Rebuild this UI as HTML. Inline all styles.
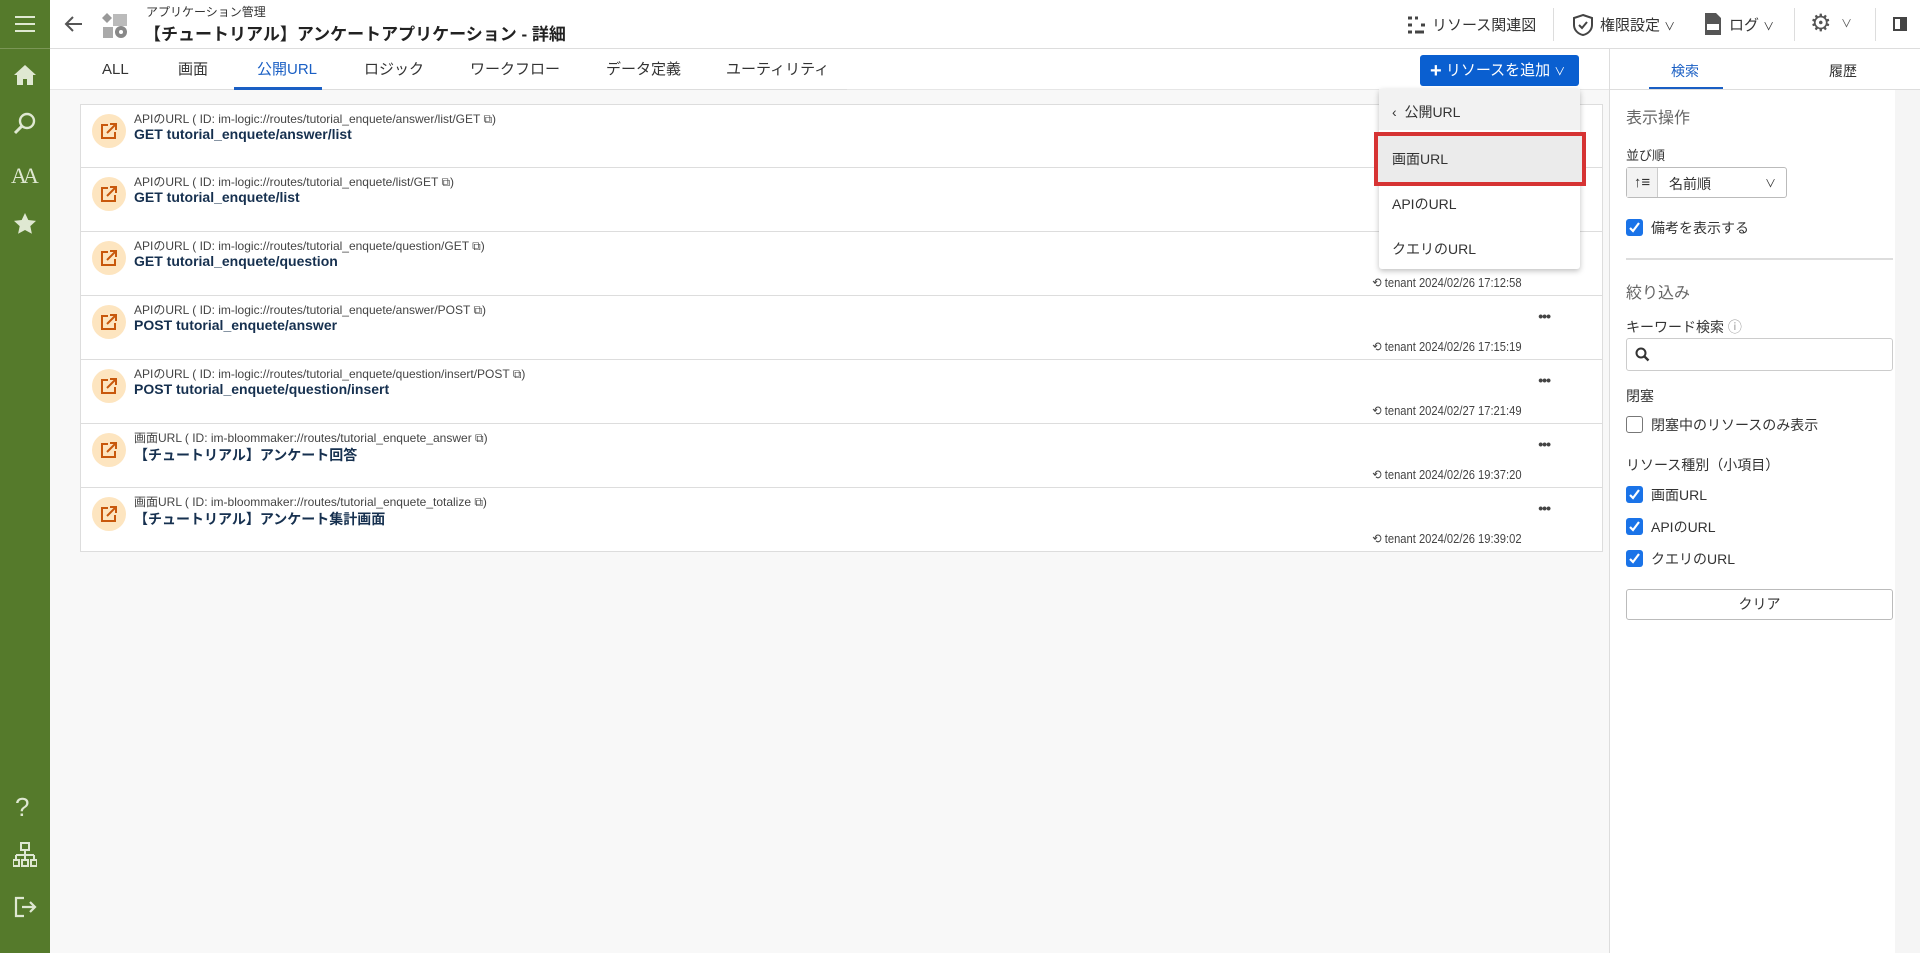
<!DOCTYPE html>
<html><head><meta charset="utf-8">
<style>
*{box-sizing:border-box;margin:0;padding:0}
body{width:1920px;height:953px;overflow:hidden;font-family:"Liberation Sans","Noto Sans CJK JP",sans-serif;color:#333;background:#f8f8f8;position:relative}
.abs{position:absolute}
.side{left:0;top:0;width:50px;height:953px;background:#557a2b}
.side svg{position:absolute;left:13px}
.hdr{left:50px;top:0;width:1870px;height:49px;background:#fff;border-bottom:1px solid #ddd}
.tabs{left:50px;top:49px;width:1559px;height:41px;background:#fff;border-bottom:1px solid #e6e6e6}
.tab{position:absolute;top:60px;height:20px;line-height:20px;font-size:15px;color:#333}
.row{position:absolute;left:80px;width:1523px;height:64px;background:#fff;border:1px solid #ddd;border-top:none}
.row .ic{position:absolute;left:11px;top:9px;width:34px;height:34px;border-radius:50%;background:#fde5c0}
.row .ic svg{position:absolute;left:8px;top:8px}
.row .lb{position:absolute;left:53px;top:5px;font-size:12px;color:#444}
.row .tt{position:absolute;left:53px;top:21px;font-size:14px;font-weight:bold;color:#16304f}
.row .ts{position:absolute;right:80px;top:43px;font-size:13px;color:#444;transform:scaleX(.86);transform-origin:right}
.row .dots{position:absolute;right:52px;top:12px;font-size:14px;font-weight:bold;color:#444;letter-spacing:-1px}
.rp{left:1609px;top:49px;width:311px;height:904px;background:#fff;border-left:1px solid #ddd}
.lbl{position:absolute;left:1626px;font-size:14px;color:#333}
.cb{position:absolute;left:1626px;width:17px;height:17px;border-radius:3px;background:#1a73e8}
.cb svg{position:absolute;left:2px;top:2px}
</style></head><body>
<div class="abs side">
<svg style="top:14px" width="24" height="20"><path d="M2 3h20M2 10h20M2 17h20" stroke="#dfe8d2" stroke-width="2"/></svg>
<div class="abs" style="left:0;top:48px;width:50px;border-top:1px solid #7b9656"></div>
<svg style="top:63px" width="24" height="24"><path d="M12 2L1 12h3v10h6v-6h4v6h6V12h3z" fill="#dfe8d2"/></svg>
<svg style="top:112px" width="24" height="24"><circle cx="14" cy="9" r="7" stroke="#dfe8d2" stroke-width="2.4" fill="none"/><path d="M9 14L2 21" stroke="#dfe8d2" stroke-width="3"/></svg>
<div class="abs" style="left:11px;top:163px;color:#dfe8d2;font-family:'Liberation Serif',serif;font-size:22px;letter-spacing:-4px">AA</div>
<svg style="top:212px" width="24" height="24"><path d="M12 1l3.3 7 7.7.9-5.7 5.2 1.6 7.6L12 18l-6.9 3.7 1.6-7.6L1 8.9 8.7 8z" fill="#dfe8d2"/></svg>
<div class="abs" style="left:15px;top:792px;color:#dfe8d2;font-size:26px">?</div>
<svg style="top:842px" width="24" height="26"><rect x="8" y="1" width="8" height="7" fill="none" stroke="#dfe8d2" stroke-width="2"/><path d="M12 8v5M3 13h18M3 13v5M12 13v5M21 13v5" stroke="#dfe8d2" stroke-width="2" fill="none"/><rect x="0" y="18" width="6" height="6" fill="none" stroke="#dfe8d2" stroke-width="2"/><rect x="9" y="18" width="6" height="6" fill="none" stroke="#dfe8d2" stroke-width="2"/><rect x="18" y="18" width="6" height="6" fill="none" stroke="#dfe8d2" stroke-width="2"/></svg>
<svg style="top:895px" width="24" height="24"><path d="M11 3H3v18h8M9 12h13M17 7l5 5-5 5" stroke="#dfe8d2" stroke-width="2.2" fill="none"/></svg>
</div>

<div class="abs hdr"></div>
<svg class="abs" style="left:64px;top:15px" width="20" height="18"><path d="M18 9H3M9 2L2 9l7 7" stroke="#555" stroke-width="2" fill="none"/></svg>
<svg class="abs" style="left:101px;top:11px" width="30" height="30"><rect x="12" y="3" width="14" height="12" fill="#bbb"/><path d="M6 2l5 5-5 5-5-5z" fill="#999"/><rect x="2" y="16" width="10" height="11" fill="#aaa"/><circle cx="20" cy="21" r="6" fill="#888"/><circle cx="20" cy="21" r="2" fill="#fff"/></svg>
<div class="abs" style="left:146px;top:3px;font-size:12px;color:#333">アプリケーション管理</div>
<div class="abs" style="left:144px;top:20px;font-size:17px;font-weight:bold;color:#222">【チュートリアル】アンケートアプリケーション - 詳細</div>

<svg class="abs" style="left:1407px;top:16px" width="18" height="18"><path d="M1 2h4M1 9h4M1 16h4M8 2h3M8 16h9M14 9h4" stroke="#444" stroke-width="3"/></svg>
<div class="abs" style="left:1432px;top:14px;font-size:15px">リソース関連図</div>
<div class="abs" style="left:1553px;top:8px;height:33px;border-left:1px solid #ddd"></div>
<svg class="abs" style="left:1572px;top:13px" width="22" height="24"><path d="M11 2l9 3v7c0 5-4 9-9 10-5-1-9-5-9-10V5z" fill="none" stroke="#444" stroke-width="2"/><path d="M7 12l3 3 5-6" stroke="#444" stroke-width="2" fill="none"/></svg>
<div class="abs" style="left:1600px;top:14px;font-size:15px">権限設定 <span style="font-size:11px">∨</span></div>
<svg class="abs" style="left:1703px;top:12px" width="20" height="24"><path d="M2 1h11l5 5v17H2z" fill="#555"/><rect x="4" y="12" width="12" height="6" fill="#fff"/></svg>
<div class="abs" style="left:1729px;top:14px;font-size:15px">ログ <span style="font-size:11px">∨</span></div>
<div class="abs" style="left:1794px;top:8px;height:33px;border-left:1px solid #ddd"></div>
<div class="abs" style="left:1810px;top:9px;font-size:24px;color:#555">⚙</div>
<div class="abs" style="left:1841px;top:15px;font-size:11px;color:#555">∨</div>
<div class="abs" style="left:1875px;top:8px;height:33px;border-left:1px solid #ddd"></div>
<svg class="abs" style="left:1893px;top:17px" width="14" height="14"><rect x="1" y="1" width="12" height="12" fill="none" stroke="#444" stroke-width="2"/><rect x="7" y="1" width="6" height="12" fill="#444"/></svg>

<div class="abs tabs"></div>
<div class="abs" style="left:80px;top:89px;width:767px;border-top:1px solid #ddd"></div>
<div class="tab" style="left:102px">ALL</div>
<div class="tab" style="left:178px">画面</div>
<div class="tab" style="left:257px;color:#1a5fc4">公開URL</div>
<div class="abs" style="left:234px;top:87px;width:88px;height:3px;background:#1a5fc4"></div>
<div class="tab" style="left:364px">ロジック</div>
<div class="tab" style="left:470px">ワークフロー</div>
<div class="tab" style="left:606px">データ定義</div>
<div class="tab" style="left:726px">ユーティリティ</div>

<div class="abs" style="left:1420px;top:55px;width:159px;height:31px;background:#0a5fd0;border-radius:3px;color:#fff;font-size:15px;line-height:31px;padding-left:10px"><b style="font-size:20px;vertical-align:-2px">+</b> リソースを追加 <span style="font-size:11px">∨</span></div>

<svg width="0" height="0" style="position:absolute"><defs><g id="ext"><path d="M8 3H2v13h13V10" stroke="#c8580c" stroke-width="2" fill="none"/><path d="M7 11L16 2M10 2h6v6" stroke="#c8580c" stroke-width="2" fill="none"/></g></defs></svg>
<div class="row" style="top:104px;border-top:1px solid #ddd"><div class="ic"><svg width="18" height="18"><use href="#ext"/></svg></div><div class="lb">APIのURL ( ID: im-logic://routes/tutorial_enquete/answer/list/GET ⧉)</div><div class="tt">GET tutorial_enquete/answer/list</div></div>
<div class="row" style="top:168px"><div class="ic"><svg width="18" height="18"><use href="#ext"/></svg></div><div class="lb">APIのURL ( ID: im-logic://routes/tutorial_enquete/list/GET ⧉)</div><div class="tt">GET tutorial_enquete/list</div></div>
<div class="row" style="top:232px"><div class="ic"><svg width="18" height="18"><use href="#ext"/></svg></div><div class="lb">APIのURL ( ID: im-logic://routes/tutorial_enquete/question/GET ⧉)</div><div class="tt">GET tutorial_enquete/question</div><div class="ts">⟲ tenant 2024/02/26 17:12:58</div></div>
<div class="row" style="top:296px"><div class="ic"><svg width="18" height="18"><use href="#ext"/></svg></div><div class="lb">APIのURL ( ID: im-logic://routes/tutorial_enquete/answer/POST ⧉)</div><div class="tt">POST tutorial_enquete/answer</div><div class="dots">•••</div><div class="ts">⟲ tenant 2024/02/26 17:15:19</div></div>
<div class="row" style="top:360px"><div class="ic"><svg width="18" height="18"><use href="#ext"/></svg></div><div class="lb">APIのURL ( ID: im-logic://routes/tutorial_enquete/question/insert/POST ⧉)</div><div class="tt">POST tutorial_enquete/question/insert</div><div class="dots">•••</div><div class="ts">⟲ tenant 2024/02/27 17:21:49</div></div>
<div class="row" style="top:424px"><div class="ic"><svg width="18" height="18"><use href="#ext"/></svg></div><div class="lb">画面URL ( ID: im-bloommaker://routes/tutorial_enquete_answer ⧉)</div><div class="tt">【チュートリアル】アンケート回答</div><div class="dots">•••</div><div class="ts">⟲ tenant 2024/02/26 19:37:20</div></div>
<div class="row" style="top:488px"><div class="ic"><svg width="18" height="18"><use href="#ext"/></svg></div><div class="lb">画面URL ( ID: im-bloommaker://routes/tutorial_enquete_totalize ⧉)</div><div class="tt">【チュートリアル】アンケート集計画面</div><div class="dots">•••</div><div class="ts">⟲ tenant 2024/02/26 19:39:02</div></div>

<div class="abs" style="left:1379px;top:89px;width:201px;height:180px;background:#fff;box-shadow:0 2px 6px rgba(0,0,0,.25);border-radius:3px">
<div class="abs" style="left:0;top:0;width:201px;height:41px;background:#f2f2f2"></div>
<div class="abs" style="left:13px;top:13px;font-size:14px">‹ &nbsp;公開URL</div>
<div class="abs" style="left:13px;top:150px;font-size:14px">クエリのURL</div>
<div class="abs" style="left:13px;top:105px;font-size:14px">APIのURL</div>
</div>
<div class="abs" style="left:1374px;top:132px;width:212px;height:54px;background:#ebebeb;border:4px solid #d63333"></div>
<div class="abs" style="left:1392px;top:149px;font-size:14px">画面URL</div>

<div class="abs rp"></div>
<div class="abs" style="left:1671px;top:61px;font-size:14px;color:#1a5fc4">検索</div>
<div class="abs" style="left:1649px;top:87px;width:74px;height:3px;background:#1a5fc4"></div>
<div class="abs" style="left:1829px;top:61px;font-size:14px">履歴</div>
<div class="abs" style="left:1610px;top:89px;width:310px;border-top:1px solid #ddd"></div>
<div class="lbl" style="top:104px;font-size:16px;color:#666">表示操作</div>
<div class="lbl" style="top:145px;font-size:13px">並び順</div>
<div class="abs" style="left:1626px;top:167px;width:161px;height:31px;border:1px solid #bbb;border-radius:3px"><div class="abs" style="left:0;top:0;width:31px;height:29px;border-right:1px solid #ccc;background:#f3f3f3;font-size:15px;text-align:center;line-height:29px">↑≡</div><div class="abs" style="left:42px;top:6px;font-size:14px">名前順</div><div class="abs" style="right:10px;top:7px;font-size:11px">∨</div></div>
<div class="cb" style="top:219px"><svg width="13" height="13"><path d="M2 7l3 3 6-8" stroke="#fff" stroke-width="2.2" fill="none"/></svg></div>
<div class="lbl" style="left:1651px;top:218px">備考を表示する</div>
<div class="abs" style="left:1626px;top:258px;width:267px;border-top:2px solid #ddd"></div>
<div class="lbl" style="top:279px;font-size:16px;color:#666">絞り込み</div>
<div class="lbl" style="top:317px">キーワード検索 <span style="color:#999">ⓘ</span></div>
<div class="abs" style="left:1626px;top:338px;width:267px;height:33px;border:1px solid #ccc;border-radius:3px"><svg style="position:absolute;left:8px;top:8px" width="16" height="16"><circle cx="6" cy="6" r="4.5" stroke="#333" stroke-width="2" fill="none"/><path d="M9.5 9.5l4 4" stroke="#333" stroke-width="2.4"/></svg></div>
<div class="lbl" style="top:386px">閉塞</div>
<div class="abs" style="left:1626px;top:416px;width:17px;height:17px;border:1px solid #777;border-radius:3px"></div>
<div class="lbl" style="left:1651px;top:415px">閉塞中のリソースのみ表示</div>
<div class="lbl" style="top:455px">リソース種別（小項目）</div>
<div class="cb" style="top:486px"><svg width="13" height="13"><path d="M2 7l3 3 6-8" stroke="#fff" stroke-width="2.2" fill="none"/></svg></div>
<div class="lbl" style="left:1651px;top:485px">画面URL</div>
<div class="cb" style="top:518px"><svg width="13" height="13"><path d="M2 7l3 3 6-8" stroke="#fff" stroke-width="2.2" fill="none"/></svg></div>
<div class="lbl" style="left:1651px;top:517px">APIのURL</div>
<div class="cb" style="top:550px"><svg width="13" height="13"><path d="M2 7l3 3 6-8" stroke="#fff" stroke-width="2.2" fill="none"/></svg></div>
<div class="lbl" style="left:1651px;top:549px">クエリのURL</div>
<div class="abs" style="left:1626px;top:589px;width:267px;height:31px;border:1px solid #bbb;border-radius:3px;text-align:center;line-height:29px;font-size:14px">クリア</div>
<div class="abs" style="left:1895px;top:90px;width:25px;height:863px;background:#f5f5f5"></div>
</body></html>
